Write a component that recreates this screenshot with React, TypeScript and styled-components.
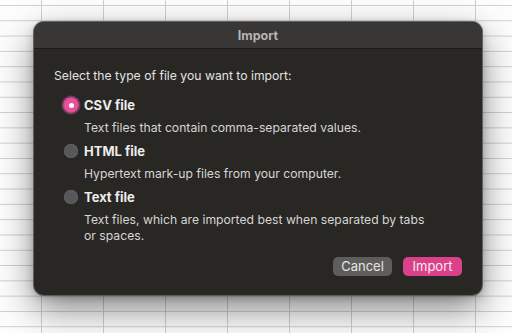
import React, { useState } from "react";
import styled, { createGlobalStyle } from "styled-components";

const GlobalStyle = createGlobalStyle`
  html, body {
    margin: 0;
    padding: 0;
  }
  body {
    width: 512px;
    height: 333px;
    overflow: hidden;
    font-family: Inter, "Noto Sans", "Liberation Sans", sans-serif;
    background-color: #fdfdfd;
    background-image:
      linear-gradient(to right, #cfcfcf 1px, transparent 1px),
      linear-gradient(to bottom, #cfcfcf 1px, transparent 1px);
    background-size: 62px 100%, 100% 15.3px;
    background-position: 41px 0, 0 5px;
  }
`;

const Sheet = styled.div`
  display: flex;
  align-items: flex-start;
  padding: 22px 0 0 34px;
`;

const Dialog = styled.div`
  width: 448px;
  height: 273px;
  box-sizing: border-box;
  display: flex;
  flex-direction: column;
  background: #292724;
  border-radius: 10px;
  overflow: hidden;
  box-shadow:
    0 0 0 1px rgba(90, 89, 86, 0.9),
    0 14px 36px rgba(0, 0, 0, 0.48),
    0 2px 8px rgba(0, 0, 0, 0.25);
`;

const TitleBar = styled.div`
  height: 26px;
  flex: none;
  display: flex;
  align-items: center;
  justify-content: center;
  background: #383735;
  border-bottom: 1px solid #1c1b19;
  color: #b4b4b3;
  font-size: 12.5px;
  font-weight: 700;
`;

const Body = styled.div`
  flex: 1;
  display: flex;
  flex-direction: column;
  padding: 19px 20px 19px 20px;
`;

const Prompt = styled.div`
  color: #e2e2e1;
  font-size: 12.2px;
  line-height: 16px;
`;

const Options = styled.div`
  display: flex;
  flex-direction: column;
  gap: 7px;
  margin: 13px 0 0 9px;
`;

const Option = styled.label`
  display: grid;
  grid-template-columns: 16px 1fr;
  column-gap: 5px;
  row-gap: 7px;
  align-items: center;
  cursor: default;
`;

const Radio = styled.span<{ $on: boolean }>`
  width: ${(p) => (p.$on ? 16 : 14)}px;
  height: ${(p) => (p.$on ? 16 : 14)}px;
  justify-self: center;
  border-radius: 50%;
  box-sizing: border-box;
  display: flex;
  align-items: center;
  justify-content: center;
  background: ${(p) =>
    p.$on ? "radial-gradient(circle, #e8509a 0 55%, #c0468a 70%, #9a3b73 100%)" : "#58575a"};
  box-shadow: ${(p) => (p.$on ? "0 0 0 1.5px rgba(200, 80, 150, 0.45)" : "inset 0 0 0 0.5px #6a6968")};

  &::after {
    content: "";
    display: ${(p) => (p.$on ? "block" : "none")};
    width: 5px;
    height: 5px;
    border-radius: 50%;
    background: #ffffff;
  }
`;

const Label = styled.span`
  color: #ececec;
  font-size: 13px;
  font-weight: 700;
  line-height: 16px;
`;

const Description = styled.span`
  grid-column: 2;
  color: #d6d6d5;
  font-size: 12.2px;
  line-height: 16px;
  max-width: 342px;
`;

const Footer = styled.div`
  margin-top: auto;
  display: flex;
  justify-content: flex-end;
  gap: 11px;
`;

const Button = styled.button<{ $primary?: boolean }>`
  width: 59px;
  height: 19px;
  padding: 0;
  border: none;
  border-radius: 5px;
  font-family: inherit;
  font-size: 13px;
  line-height: 19px;
  color: ${(p) => (p.$primary ? "#fbeaf2" : "#e4e4e3")};
  background: ${(p) => (p.$primary ? "#d9418a" : "#5e5d5b")};
`;

const choices = [
  { id: "csv", label: "CSV file", text: "Text files that contain comma-separated values." },
  { id: "html", label: "HTML file", text: "Hypertext mark-up files from your computer." },
  {
    id: "text",
    label: "Text file",
    text: "Text files, which are imported best when separated by tabs or spaces.",
  },
];

export default function App() {
  const [kind, setKind] = useState("csv");

  return (
    <>
      <GlobalStyle />
      <Sheet>
        <Dialog>
          <TitleBar>Import</TitleBar>
          <Body>
            <Prompt>Select the type of file you want to import:</Prompt>
            <Options>
              {choices.map((c) => (
                <Option key={c.id} onClick={() => setKind(c.id)}>
                  <Radio $on={kind === c.id} />
                  <Label>{c.label}</Label>
                  <Description>{c.text}</Description>
                </Option>
              ))}
            </Options>
            <Footer>
              <Button>Cancel</Button>
              <Button $primary>Import</Button>
            </Footer>
          </Body>
        </Dialog>
      </Sheet>
    </>
  );
}
